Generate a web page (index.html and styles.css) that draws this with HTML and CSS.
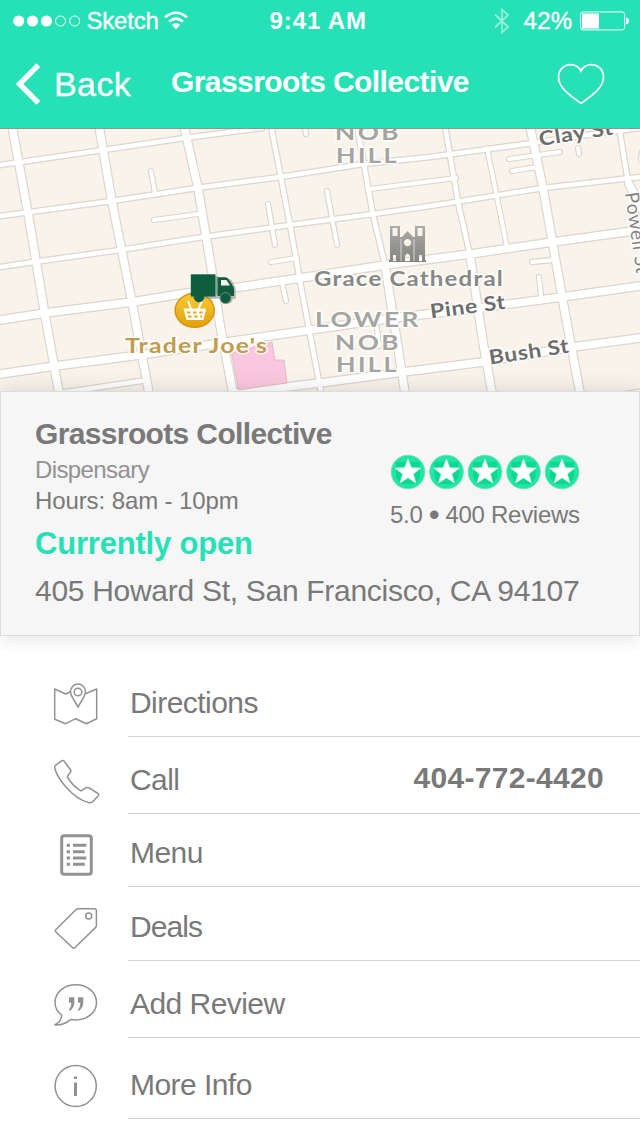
FILE: index.html
```html
<!DOCTYPE html>
<html lang="en">
<head>
<meta charset="utf-8">
<title>Grassroots Collective</title>
<link rel="stylesheet" href="styles.css">
</head>
<body>
<header class="header">
  <div class="status">
    <svg class="signal" width="68" height="12" viewBox="0 0 68 12"><g fill="#fff"><circle cx="5.7" cy="6" r="5.5"/><circle cx="19.5" cy="6" r="5.5"/><circle cx="33.5" cy="6" r="5.5"/></g><g fill="none" stroke="#fff"><circle cx="47.5" cy="6" r="5"/><circle cx="61.7" cy="6" r="5"/></g></svg>
    <span class="carrier">Sketch</span>
    <svg class="wifi" width="24" height="19" viewBox="0 0 24 19"><g fill="none" stroke="#fff" stroke-width="2.5"><path d="M1 6.4Q12 -3 23 6.4"/><path d="M5 10.6Q12 4.6 19 10.6"/></g><path d="M7.8 13.8Q12 10.4 16.2 13.8L12 18.2Z" fill="#fff"/></svg>
    <span class="clock">9:41 AM</span>
    <svg class="bluetooth" width="16" height="26" viewBox="0 0 16 26"><path d="M1 6.5L14 19L8 24.3V1.7L14 7L1 19.5" fill="none" stroke="#fff" stroke-opacity=".5" stroke-width="1.8"/></svg>
    <span class="percent">42%</span>
    <svg class="battery" width="50" height="20" viewBox="0 0 50 20"><rect x=".6" y=".9" width="44" height="18" rx="2.5" fill="none" stroke="#fff"/><path d="M2 2.5H19V17.5H2ZM46 6.5Q49 7 49 10Q49 13 46 13.5Z" fill="#fff"/></svg>
  </div>
  <div class="nav">
    <svg class="chevron" width="25" height="42" viewBox="0 0 25 42"><path d="M22.3 2.2L3.5 21L22.3 39.8" fill="none" stroke="#fff" stroke-width="5.4"/></svg>
    <span class="back">Back</span>
    <h1 class="nav-title">Grassroots Collective</h1>
    <svg class="heart" width="48" height="42" viewBox="0 0 48 42"><path d="M24 40.4C17 35 1.5 26 1.5 14.2C1.5 7 7 1.6 13.5 1.6C18.2 1.6 22 4 24 8C26 4 29.8 1.6 34.5 1.6C41 1.6 46.5 7 46.5 14.2C46.5 26 31 35 24 40.4Z" fill="none" stroke="#fff" stroke-width="1.7"/></svg>
  </div>
</header>

<svg class="map" width="640" height="263" viewBox="0 128 640 263">
  <defs>
    <linearGradient id="gold" x1="0" y1="0" x2="0" y2="1"><stop offset="0" stop-color="#fbcb32"/><stop offset="1" stop-color="#dfa00c"/></linearGradient>
    <linearGradient id="stone" x1="0" y1="0" x2="0" y2="1"><stop offset="0" stop-color="#aaaaa7"/><stop offset="1" stop-color="#858582"/></linearGradient>
    <g id="lanes">
      <path d="M271 126L290 225L302 292L321 392"/>
      <path d="M357 126L373 215L385 265"/>
      <path d="M445 126L458 202L470 255"/>
      <path d="M619 126L628 182"/>
      <path d="M0 165L103 150L185 138L262 128"/>
      <path d="M0 216L112 201L200 187.5L280 177L363 164L430 157L533 143L600 133L640 128"/>
      <path d="M0 267L37 261.5L120 250L203 237L290 225L373 214L430 206L543 188L640 177"/>
      <path d="M60 393L141 381"/>
    </g>
    <g id="alleys">
      <path d="M151 171L155 193M154 220L198 214M305 126L306 134M268 204L275 245M327 191L337 245M271 262L297 258M282 282L286 301M370 189L456 178M487 148L507 247M509 159L560 152M512 171L537 167M532 262L553 260M539 277L541 295M578 148L579 154M377 328L379 346M642 152L641 160"/>
    </g>
    <g id="avenues">
      <path d="M12 126L28 213L45 315L59 393"/>
      <path d="M99 126L112 202L132 302L149 393"/>
      <path d="M184 126L198 188L212 272L220 325L233 393"/>
      <path d="M385 265L405 393"/>
      <path d="M470 255L483 342L492 393"/>
      <path d="M530 126L543 188L553 245L563 302L580 393"/>
      <path d="M629 184L645 215"/>
      <path d="M0 320L45 313L132 302L187 293L240 287L307 277L385 265L470 254L553 242L640 230"/>
      <path d="M0 374L55 366L140 355L220 343L310 330L393 318L480 308L562 297L640 286"/>
      <path d="M236 393L320 383L403 372L483 362L573 347L640 338"/>
    </g>
  </defs>
  <rect y="128" width="640" height="264" fill="#f8f4ec"/>
  <g class="road-edge"><use href="#alleys" stroke-width="6.3"/><use href="#lanes" stroke-width="7"/><use href="#avenues" stroke-width="10"/></g>
  <g class="road"><use href="#alleys" stroke-width="4"/><use href="#lanes" stroke-width="4.6"/><use href="#avenues" stroke-width="7.6"/></g>
  <path d="M231.500 353L272 342L275 360H284L287 383L238.500 390Z" fill="#fac8de" stroke="#e0b4bd" stroke-width=".8"/>
  <path d="M620 392L640 389" stroke="#d5cdc2"/>

  <g class="district">
    <text x="335" y="140" textLength="66" lengthAdjust="spacingAndGlyphs">NOB</text>
    <text x="336" y="163" textLength="63" lengthAdjust="spacingAndGlyphs">HILL</text>
    <text x="315" y="327" textLength="106" lengthAdjust="spacingAndGlyphs">LOWER</text>
    <text x="335" y="350" textLength="66" lengthAdjust="spacingAndGlyphs">NOB</text>
    <text x="336" y="372" textLength="63" lengthAdjust="spacingAndGlyphs">HILL</text>
  </g>
  <text class="place" x="314" y="286" textLength="190" lengthAdjust="spacingAndGlyphs">Grace Cathedral</text>
  <text class="shop" x="125" y="353" textLength="143" lengthAdjust="spacingAndGlyphs">Trader Joe's</text>
  <g class="street">
    <text transform="translate(540 146) rotate(-9)" textLength="75" lengthAdjust="spacingAndGlyphs">Clay St</text>
    <text transform="translate(431 318.500) rotate(-7.5)" textLength="76" lengthAdjust="spacingAndGlyphs">Pine St</text>
    <text transform="translate(490 364.500) rotate(-8.5)" textLength="81" lengthAdjust="spacingAndGlyphs">Bush St</text>
    <text class="powell" transform="translate(625 193) rotate(82)" textLength="82" lengthAdjust="spacingAndGlyphs">Powell St</text>
  </g>

  <path fill="url(#stone)" fill-rule="evenodd" d="M390 226H400V237H402L407.500 231L413 237H415V226H425V260H426V262H389V260H390ZM392.500 228V236H397.500V228ZM417.500 228V236H422.500V228ZM407.500 239A3.600 3.600 0 1 0 407.600 239ZM393 255V261H396V255ZM419 255V261H422V255ZM405 261V256Q407.500 251 410 256V261Z"/>
  <path d="M401 239V261M414 239V261" stroke="#d8d6d1"/>

  <ellipse cx="194.700" cy="310.300" rx="19.500" ry="17" fill="url(#gold)" stroke="#dd920d" stroke-width="1.500"/>
  <path d="M183.500 308.500H206L203.500 320H186.500Z" fill="#fff"/>
  <path d="M188 301L191 309M202 301L198.500 309" stroke="#fff" stroke-width="2"/>
  <path d="M187 312.500H203M188 316.500H202" stroke="#e4a916" stroke-width="2" stroke-dasharray="3.500 2.600"/>
  <g transform="translate(1.800 1.800)" fill="#8b8578" opacity=".55"><path d="M191 274.500H216V277H226Q229 277 230 279L234 286V297H191Z"/><circle cx="226" cy="297" r="5"/></g>
  <g fill="#0e5d40"><path d="M190.800 274.300H215.500V296.500H190.800Z"/><path fill="#f8f4ec" d="M220 279H228L232 287H220Z"/><path fill-rule="evenodd" d="M217.500 277.300H225Q227.500 277.300 228.500 279L232.500 285.500Q234 287 234 289V296H217.500ZM221 280V285.500H230L226.500 280Z"/><circle cx="199" cy="297" r="5.200"/><circle cx="225.500" cy="298" r="5.500" stroke="#829886" stroke-width=".8"/></g>
  <path d="M216.500 276.500V294" stroke="#8fa496" stroke-width="1.200"/>
  <path d="M0 128.500H640" stroke="#9c9188"/>
</svg>

<section class="card">
  <div class="summary">
    <div>
      <h2 class="name">Grassroots Collective</h2>
      <p class="kind">Dispensary</p>
      <p class="hours">Hours: 8am - 10pm</p>
      <p class="open">Currently open</p>
    </div>
    <div class="rating">
      <svg class="stars" width="192" height="36" viewBox="0 0 192 36">
        <defs><g id="star"><circle r="16.800" fill="#1fe5a5" stroke="#76dfbd" stroke-width="1"/><path d="M-12-10H12V5L8 12H-8L-12 5Z" fill="#0cd890"/><path d="M0-13L3.300-4.200L12.700-3.900L5.300 2L7.900 11L0 5.800L-7.900 11L-5.300 2L-12.700-3.900L-3.300-4.200Z" fill="#fff" stroke="#d7f8eb" stroke-width=".7"/></g></defs>
        <use href="#star" x="19" y="18"/><use href="#star" x="57.500" y="18"/><use href="#star" x="96" y="18"/><use href="#star" x="134.500" y="18"/><use href="#star" x="173" y="18"/>
      </svg>
      <p class="reviews">5.0 <span class="bullet">•</span> 400 Reviews</p>
    </div>
  </div>
  <p class="address">405 Howard St, San Francisco, CA 94107</p>
</section>

<main class="actions">
  <div class="row directions">
    <svg class="icon" viewBox="0 0 50 48"><path d="M18.500 10.800L13.700 13L2.700 8V38.300L13.700 42.700L23.700 37.700L34.300 42.700L44.700 37.700V8L34 12.500"/><path d="M26 26.300C24 21 18.500 16 18.500 10.500A7.500 7.500 0 0 1 33.500 10.500C33.500 16 28 21 26 26.300Z"/><circle cx="26" cy="11" r="3.800"/></svg>
    <div class="line"><span>Directions</span></div>
  </div>
  <div class="row call">
    <svg class="icon" viewBox="0 0 50 48"><path d="M10 2.700Q11.500 2.200 12.500 3.700L18.600 12Q19.200 13 18.500 14L15.700 18Q15.200 19 16 20C19 25 23 29 28 32.300Q29 33 30 32.300L34 29.700Q36 29 38 30.300L46 35.500Q47.300 36.500 46.300 37.700L41 43.500Q39 45.300 36.500 44.600C28 42.500 20 36 13 28C7 21 4 15 2.700 10Q2.500 8.300 3.500 7.300Z"/></svg>
    <div class="line"><span>Call</span><strong class="phone">404-772-4420</strong></div>
  </div>
  <div class="row menu">
    <svg class="icon" viewBox="0 0 50 48"><rect x="9.700" y="4.700" width="29.600" height="38.600" rx="2.500" stroke-width="3"/><path d="M14.700 14.300H18M21 14.300H34.300M14.700 20.700H18M21 20.700H32.700M14.700 27H18M21 27H34.300M14.700 33.300H18M21 33.300H32.700" stroke-width="3"/></svg>
    <div class="line"><span>Menu</span></div>
  </div>
  <div class="row deals">
    <svg class="icon" viewBox="0 0 50 48"><path d="M26.300 3.700H42.500Q44.400 3.700 44.400 5.600V20.500Q44.400 21.700 43.500 22.600L23 42.500Q21.700 43.800 20.400 42.500L3.900 27Q2.700 25.700 3.900 24.500L24.200 4.500Q25 3.700 26.300 3.700Z"/><circle cx="36.700" cy="11" r="3"/></svg>
    <div class="line"><span>Deals</span></div>
  </div>
  <div class="row review">
    <svg class="icon" viewBox="0 0 50 48"><path d="M9.700 33C5.500 30 3 25.500 3 20.500C3 10.500 12 2.700 23.800 2.700S44.500 10.500 44.500 20.500S35.500 37.900 23.800 37.900C22 37.900 20.500 37.800 19 37.400C14 41.500 8 43.500 2.800 42.800C7 41 9.500 37.500 9.700 33Z"/><path class="solid" d="M17 15.300H22.300V20.500Q22.300 26 17.700 29L16.800 27.500Q19.200 25.500 19.300 20.700H17ZM26 15.300H31.300V20.500Q31.300 26 26.700 29L25.800 27.500Q28.200 25.500 28.300 20.700H26Z"/></svg>
    <div class="line"><span>Add Review</span></div>
  </div>
  <div class="row info">
    <svg class="icon" viewBox="0 0 50 48"><circle cx="23.700" cy="23" r="20.600"/><path d="M23.500 13.500V16" stroke-width="3"/><path d="M23.500 19.500V33" stroke-width="3"/></svg>
    <div class="line"><span>More Info</span></div>
  </div>
</main>
</body>
</html>
```
FILE: styles.css
```css
* { box-sizing: border-box; }
body {
  margin: 0;
  width: 640px;
  height: 1136px;
  overflow: hidden;
  background: #fff;
  color: #797979;
  font-family: "Liberation Sans", Arial, sans-serif;
  font-size: 30px;
  line-height: 36px;
}
h1, h2, p { margin: 0; font-size: 30px; }
svg { display: block; flex: none; }
span, h1, p, strong { white-space: nowrap; }

.header { height: 128px; background: #26e1b5; color: #fff; }
.status {
  display: flex;
  align-items: center;
  height: 41px;
  padding-left: 12.500px;
  font-size: 24px;
  line-height: 30px;
}
.carrier { width: 72px; margin-left: 6px; letter-spacing: -.2px; -webkit-text-stroke: .4px #fff; }
.wifi { margin-left: 5px; }
.clock { width: 100px; margin-left: 82px; font-weight: bold; letter-spacing: .9px; }
.bluetooth { margin-left: 124px; }
.percent { width: 50px; margin-left: 14px; letter-spacing: .3px; -webkit-text-stroke: .4px #fff; }
.battery { margin-left: 6px; }
.nav { display: flex; align-items: flex-start; padding-left: 16px; }
.chevron { margin-top: 22px; }
.back { width: 80px; margin: 23px 0 0 13px; font-size: 34px; line-height: 40px; letter-spacing: .4px; -webkit-text-stroke: .3px #fff; }
.nav-title { width: 300px; margin: 23px 0 0 37px; letter-spacing: -.58px; }
.heart { margin: 22px 0 0 86px; }

.road-edge { fill: none; stroke: #dcd6cc; stroke-linecap: round; stroke-linejoin: round; }
.road { fill: none; stroke: #fff; stroke-linecap: round; stroke-linejoin: round; }
.map text { font-family: Lato, sans-serif; font-weight: bold; letter-spacing: 1px; paint-order: stroke; stroke: #fff; stroke-opacity: .8; stroke-width: 3px; stroke-linejoin: round; }
.map .district text { font-size: 21px; letter-spacing: 2px; fill: #a4a4a1; }
.map .place { font-size: 20px; fill: #888885; }
.map .shop { font-size: 20px; fill: #c19c50; }
.map .street text { font-size: 20px; letter-spacing: .5px; fill: #6d6d6c; }
.map .street .powell { font-size: 19px; font-weight: normal; fill: #858583; }

.card {
  position: relative;
  height: 245px;
  padding: 24px 34px 0;
  border: 1px solid #dcdcdc;
  background: #f6f6f6;
  box-shadow: 0 0 20px rgba(0, 0, 0, .14);
}
.summary { display: flex; justify-content: space-between; }
.name { letter-spacing: -.64px; }
.kind { margin-top: 3px; font-size: 24px; line-height: 30px; letter-spacing: -.6px; color: #929292; }
.hours { font-size: 24px; line-height: 32px; letter-spacing: -.1px; }
.rating { width: 216px; padding-top: 38px; }
.reviews { margin: 10px 0 0 1px; font-size: 24px; line-height: 30px; letter-spacing: -.28px; }
.bullet { display: inline-block; transform: scale(1.3); margin: 0 1px; }
.open { margin-top: 8px; font-size: 31px; line-height: 38px; font-weight: bold; letter-spacing: -.2px; color: #26e1b5; }
.address { margin-top: 10px; letter-spacing: -.29px; }

.row { display: flex; align-items: flex-end; }
.icon { width: 50px; height: 48px; margin: 0 26px 8px 52px; fill: none; stroke: #929292; stroke-width: 1.500px; stroke-linejoin: round; }
.icon .solid { fill: #929292; stroke: none; }
.line {
  display: flex;
  flex: 1;
  align-items: flex-end;
  justify-content: space-between;
  height: 100%;
  padding: 0 36px 15px 2px;
  border-bottom: 1px solid #d2d2d2;
  letter-spacing: -.55px;
}
.phone { margin-bottom: 2px; letter-spacing: .3px; }
.directions { height: 101px; }
.call { height: 77px; }
.menu { height: 73px; }
.deals { height: 74px; }
.review { height: 77px; }
.info { height: 81px; }
.menu .line { padding-bottom: 15px; }
.deals .line { letter-spacing: -.95px; }
```
